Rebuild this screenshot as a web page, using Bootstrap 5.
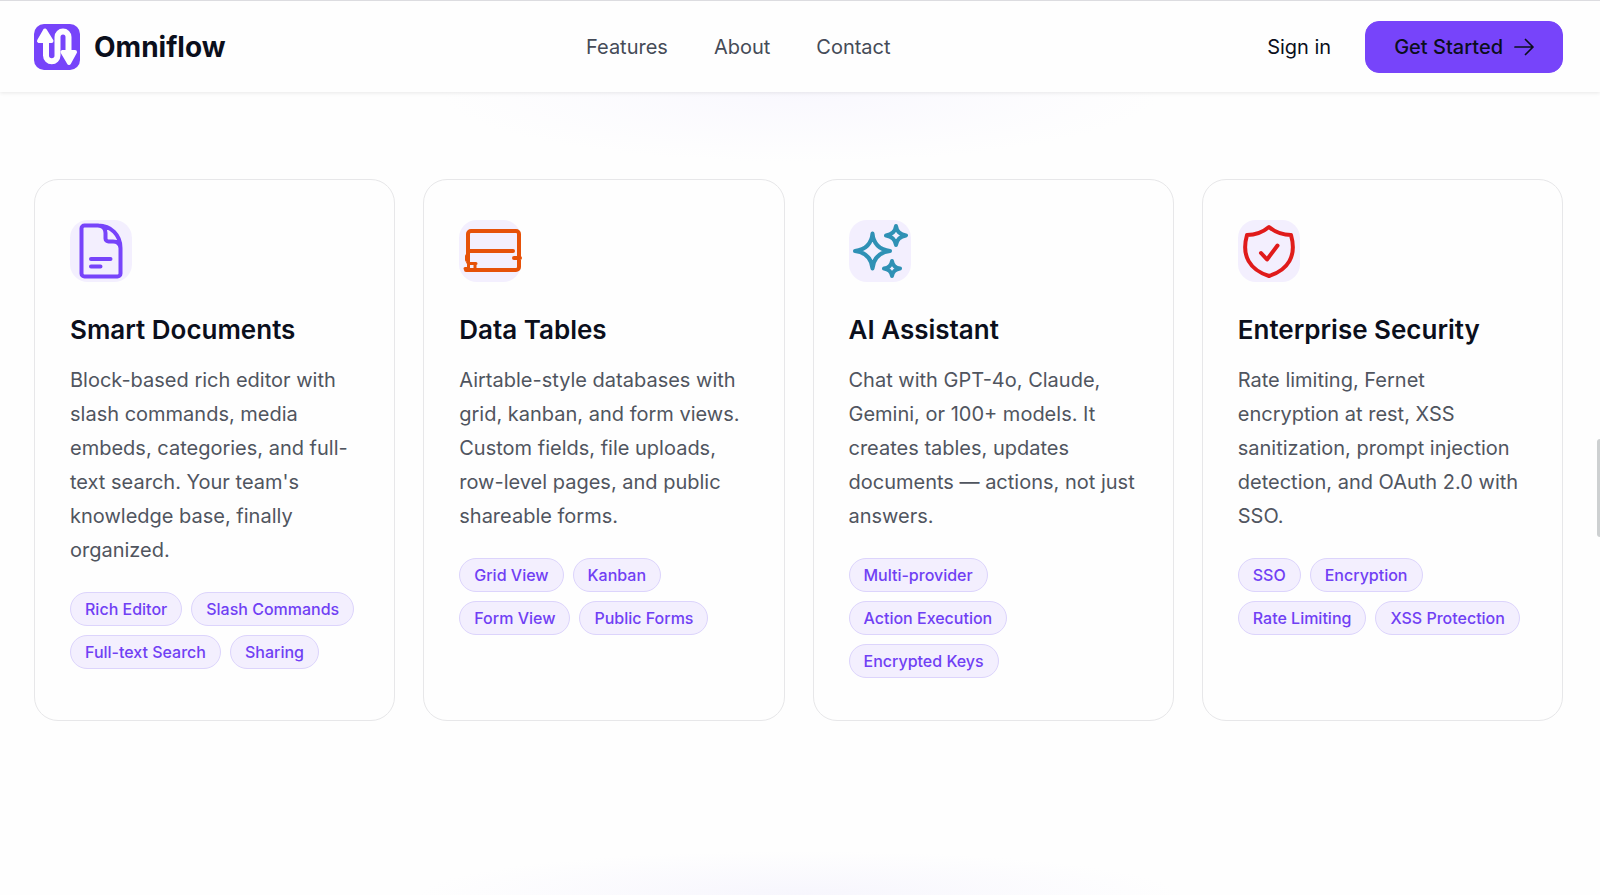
<!DOCTYPE html>
<html lang="en">
<head>
<meta charset="utf-8">
<meta name="viewport" content="width=device-width, initial-scale=1">
<title>Omniflow</title>
<link href="https://cdn.jsdelivr.net/npm/bootstrap@5.3.0/dist/css/bootstrap.min.css" rel="stylesheet">
<style>
  :root { --violet: #7744fa; --ink: #0b0f1c; }
  body { font-family: Inter, "Liberation Sans", sans-serif; font-size: 20px; color: var(--ink); background: #fefefe; min-height: 100vh; overflow-x: hidden; }
  .page-x { padding-left: 34px; padding-right: 37px; }
  .site-bar { border-top: 1px solid #dcdce0; padding-top: 20px; padding-bottom: 19px; background: #fefefe; box-shadow: 0 1px 4px rgba(0,0,0,.09); }
  .brand-link { gap: 14px; }
  .brand-name { font-size: 28px; font-weight: 700; line-height: 34px; }
  .site-bar .nav-link { color: #454b57; padding: 0; line-height: 30px; }
  .main-links { gap: 46px; }
  .account-links { gap: 34px; }
  .btn-start { --bs-btn-font-size: 20px; --bs-btn-bg: var(--violet); --bs-btn-border-color: var(--violet); --bs-btn-color: var(--ink); --bs-btn-hover-bg: #6937e8; --bs-btn-font-weight: 500; --bs-btn-border-radius: 14px; --bs-btn-padding-x: 28px; --bs-btn-padding-y: 10px; line-height: 30px; gap: 11px; }
  .features { flex: 1 0 auto; padding-top: 87px; padding-bottom: 60px;
    background: radial-gradient(ellipse 360px 70px at 50% 0, #f9f8fe, rgba(254,254,254,0)), radial-gradient(ellipse 380px 44px at 50% 100%, #f7f6fd, rgba(254,254,254,0)); }
  .feature-grid { display: grid; grid-template-columns: repeat(auto-fit, minmax(300px, 1fr)); gap: 28px; }
  .feature { --bs-card-border-color: #e7e7e9; --bs-card-border-radius: 24px; --bs-card-bg: #fefefe; }
  .feature .card-body { padding: 40px 34px 42px 35px; }
  .tile { width: 62px; height: 62px; border-radius: 18px; background: #f3effe; margin-bottom: 30px; }
  .tile svg { display: block; }
  .feature h2 { font-size: 26px; line-height: 36px; font-weight: 600; margin-bottom: 15px; }
  .feature p { line-height: 34px; color: #50555f; margin-bottom: 25px; }
  .tags { gap: 9px; }
  .tag { font-size: 16px; font-weight: 500; line-height: 24px; padding: 4px 14px; border: 1px solid #dcd4fc; background: #f3effe; color: #7040f4; border-radius: 18px; }
  .scroll-thumb { position: fixed; right: 0; top: 49%; width: 3px; height: 11%; border-radius: 3px 0 0 3px; background: #cdd0d1; }
</style>
</head>
<body class="d-flex flex-column">
<header class="site-bar page-x d-flex align-items-center justify-content-between position-relative">
  <a href="#" class="brand-link d-flex align-items-center text-decoration-none text-reset">
    <svg width="46" height="46" viewBox="0 0 46 46" aria-hidden="true"><rect width="46" height="46" rx="10" fill="#7744fa"/><path d="M12 14V31.500a5.750 5.750 0 0 0 11.500 0V13a5.500 5.500 0 0 1 11 0V32" fill="none" stroke="#fefefe" stroke-width="6"/><path d="M11 6.500L5 17H17.500ZM35 39L28.500 28H41Z" fill="#fefefe" stroke="#fefefe" stroke-width="4" stroke-linejoin="round"/></svg>
    <span class="brand-name">Omniflow</span>
  </a>
  <nav class="nav main-links me-3" aria-label="Main">
    <a class="nav-link" href="#">Features</a>
    <a class="nav-link" href="#">About</a>
    <a class="nav-link" href="#">Contact</a>
  </nav>
  <div class="account-links d-flex align-items-center">
    <a href="#" class="text-reset text-decoration-none">Sign in</a>
    <button type="button" class="btn btn-start d-flex align-items-center">Get Started
      <svg width="20" height="20" viewBox="0 0 20 20" fill="none" stroke="currentColor" stroke-width="1.700" stroke-linecap="round" stroke-linejoin="round" aria-hidden="true"><path d="M1 10H19M11.500 2.500L19 10L11.500 17.500"/></svg>
    </button>
  </div>
</header>
<main class="features page-x">
  <div class="feature-grid">
    <article class="card feature"><div class="card-body">
      <div class="tile"><svg width="62" height="62" viewBox="0 0 62 62" fill="none" stroke="#7744fa" stroke-width="4" stroke-linecap="round" stroke-linejoin="round" aria-hidden="true"><path d="M14 5.500H28C41 5.500 50.500 15 50.500 28V53.500a3 3 0 0 1-3 3H14.500a3 3 0 0 1-3-3V8.500a3 3 0 0 1 3-3ZM28 5.500C34 6 35.500 9 35.500 13V18.500a3 3 0 0 0 3 3H43C47 21.500 50 23 50.500 28M21 39H40.500M21 46.500H30.500"/></svg></div>
      <h2>Smart Documents</h2>
      <p>Block-based rich editor with slash commands, media embeds, categories, and full-text search. Your team's knowledge base, finally organized.</p>
      <div class="tags d-flex flex-wrap"><span class="tag">Rich Editor</span><span class="tag">Slash Commands</span><span class="tag">Full-text Search</span><span class="tag">Sharing</span></div>
    </div></article>
    <article class="card feature"><div class="card-body">
      <div class="tile"><svg width="64" height="62" viewBox="0 0 64 62" fill="none" stroke="#e65109" stroke-width="4" stroke-linecap="round" stroke-linejoin="round" aria-hidden="true"><path d="M9 42V14a3 3 0 0 1 3-3H57a3 3 0 0 1 3 3V47a3 3 0 0 1-3 3H7M9 31H54M55 38H61M8 36V40"/><path d="M10 43.500H17M16 44V49M9.500 43V50M6 48.500H9" stroke-width="3"/></svg></div>
      <h2>Data Tables</h2>
      <p>Airtable-style databases with grid, kanban, and form views. Custom fields, file uploads, row-level pages, and public shareable forms.</p>
      <div class="tags d-flex flex-wrap"><span class="tag">Grid View</span><span class="tag">Kanban</span><span class="tag">Form View</span><span class="tag">Public Forms</span></div>
    </div></article>
    <article class="card feature"><div class="card-body">
      <div class="tile"><svg width="62" height="62" viewBox="0 0 62 62" fill="none" stroke="#2f91b5" stroke-width="4" stroke-linejoin="round" aria-hidden="true"><path d="M23.500 13.500Q25 29 41 31Q25 33 23.500 48.500Q22 33 6 31Q22 29 23.500 13.500ZM47 6Q48 14 57 15.500Q48 17 47 25Q46 17 37 15.500Q46 14 47 6ZM43 41Q44 47.500 51 48.500Q44 49.500 43 56Q42 49.500 35 48.500Q42 47.500 43 41Z"/></svg></div>
      <h2>AI Assistant</h2>
      <p>Chat with GPT-4o, Claude, Gemini, or 100+ models. It creates tables, updates documents — actions, not just answers.</p>
      <div class="tags d-flex flex-wrap"><span class="tag">Multi-provider</span><span class="tag">Action Execution</span><span class="tag">Encrypted Keys</span></div>
    </div></article>
    <article class="card feature"><div class="card-body">
      <div class="tile"><svg width="62" height="62" viewBox="0 0 62 62" fill="none" stroke="#e01b1b" stroke-width="4" stroke-linecap="round" stroke-linejoin="round" aria-hidden="true"><path d="M31 7C37 12 44 15 53 15C59 36 50 50 31 56C12 50 3 36 9 15C18 15 25 12 31 7ZM23 33L29 39.500L39.500 25.500"/></svg></div>
      <h2>Enterprise Security</h2>
      <p>Rate limiting, Fernet encryption at rest, XSS sanitization, prompt injection detection, and OAuth 2.0 with SSO.</p>
      <div class="tags d-flex flex-wrap"><span class="tag">SSO</span><span class="tag">Encryption</span><span class="tag">Rate Limiting</span><span class="tag">XSS Protection</span></div>
    </div></article>
  </div>
</main>
<div class="scroll-thumb" aria-hidden="true"></div>
<script src="https://cdn.jsdelivr.net/npm/bootstrap@5.3.0/dist/js/bootstrap.bundle.min.js"></script>
</body>
</html>
